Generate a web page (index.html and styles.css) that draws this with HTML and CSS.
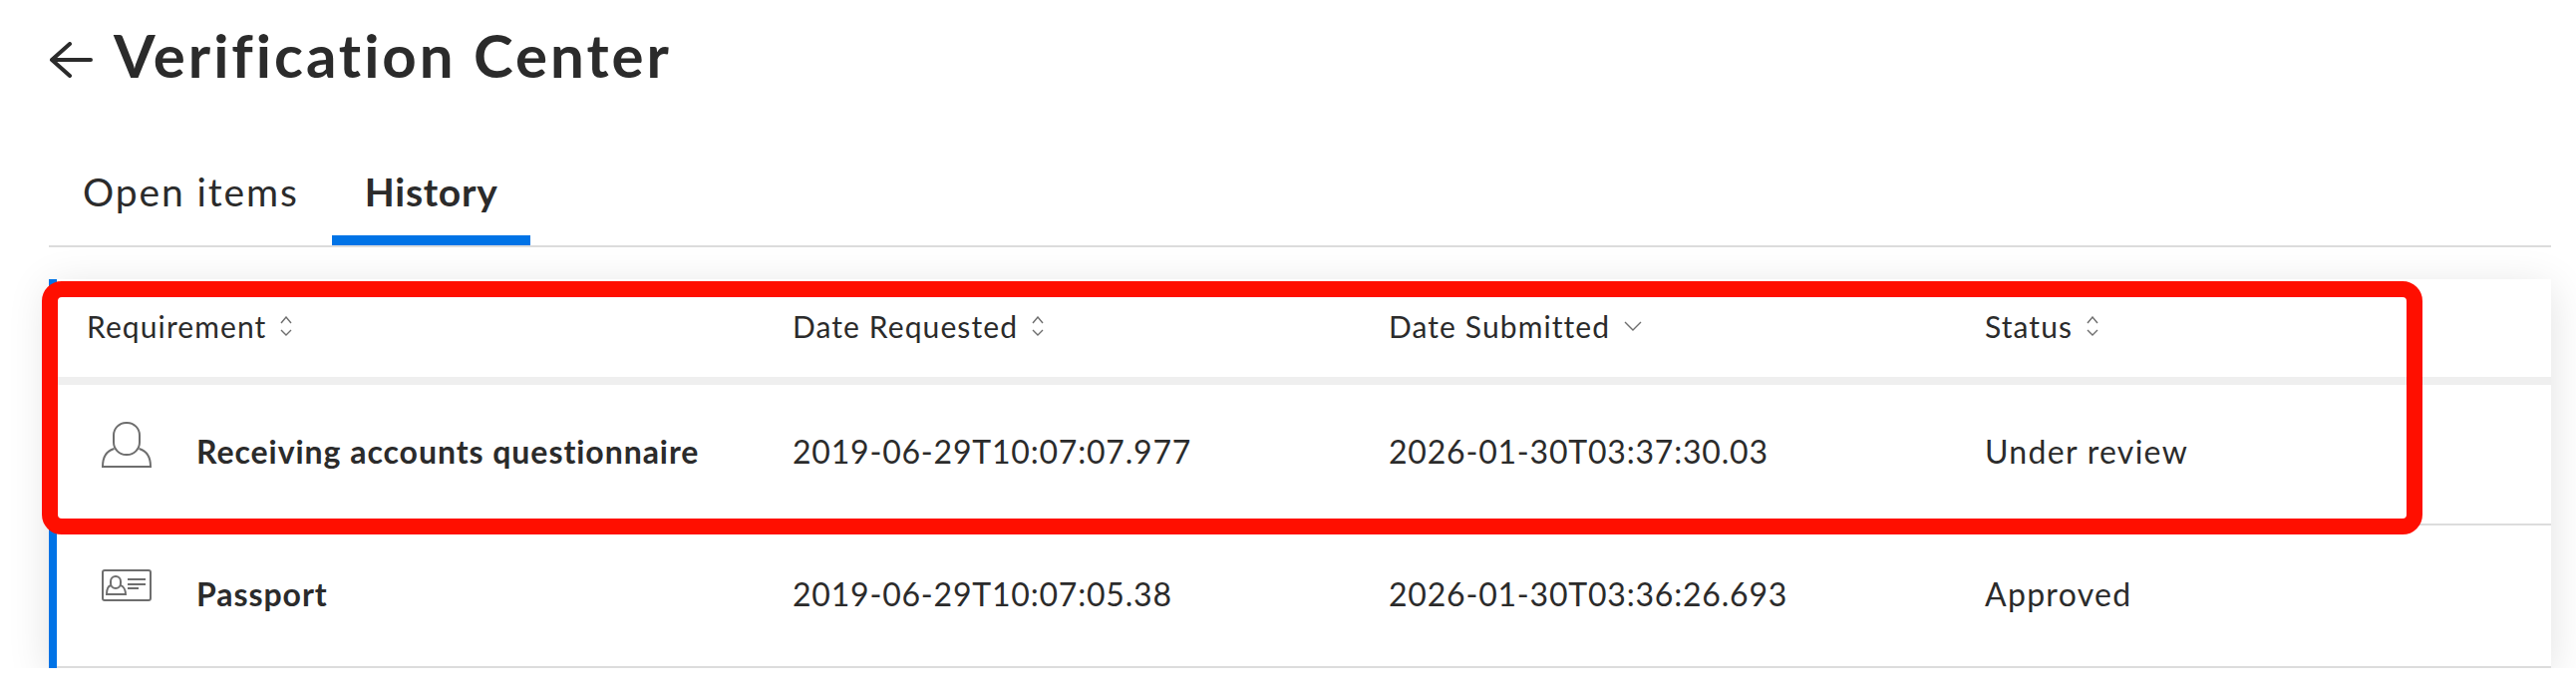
FILE: index.html
```html
<!DOCTYPE html>
<html lang="en">
<head>
    <meta charset="UTF-8">
    <meta name="viewport" content="width=device-width, initial-scale=1.0">
    <title>Verification Center</title>
    <link rel="stylesheet" href="styles.css">
</head>
<body>
    <header class="page-header">
        <svg class="back-arrow" width="44" height="36" viewBox="0 0 44 36" fill="none" stroke="#2b2b2b" stroke-width="4" stroke-linecap="round" stroke-linejoin="round">
            <path d="M21 2 L3 18 L21 34 M3 18 H42"/>
        </svg>
        <h1>Verification Center</h1>
    </header>

    <nav class="tabs">
        <a class="tab">Open items</a>
        <a class="tab active">History</a>
    </nav>

    <div class="card">
        <div class="row head-row">
            <div class="cell">Requirement
                <svg class="sort" width="12" height="20" viewBox="0 0 12 20" fill="none" stroke="#6e6e6e" stroke-width="1.4"><path d="M1 7 L6 1 L11 7 M1 14 L6 19 L11 14"/></svg>
            </div>
            <div class="cell">Date Requested
                <svg class="sort" width="12" height="20" viewBox="0 0 12 20" fill="none" stroke="#6e6e6e" stroke-width="1.4"><path d="M1 7 L6 1 L11 7 M1 14 L6 19 L11 14"/></svg>
            </div>
            <div class="cell">Date Submitted
                <svg class="sort" width="18" height="10" viewBox="0 0 18 10" fill="none" stroke="#6e6e6e" stroke-width="1.4"><path d="M1 1 L9 9 L17 1"/></svg>
            </div>
            <div class="cell">Status
                <svg class="sort" width="12" height="20" viewBox="0 0 12 20" fill="none" stroke="#6e6e6e" stroke-width="1.4"><path d="M1 7 L6 1 L11 7 M1 14 L6 19 L11 14"/></svg>
            </div>
        </div>

        <div class="row item-row first-item">
            <div class="cell name-cell">
                <svg class="item-icon" width="50" height="46" viewBox="0 0 50 46" fill="none" stroke="#6e6e6e" stroke-width="2">
                    <rect x="12" y="1" width="26" height="32" rx="12.5"/>
                    <path d="M12.500 27 C5 29 1 35 1 45 H49 C49 35 45 29 37.500 27"/>
                </svg>
                <span class="item-name">Receiving accounts questionnaire</span>
            </div>
            <div class="cell">2019-06-29T10:07:07.977</div>
            <div class="cell">2026-01-30T03:37:30.03</div>
            <div class="cell status-cell">Under review</div>
        </div>

        <div class="row item-row last-item">
            <div class="cell name-cell">
                <svg class="item-icon id-icon" width="50" height="32" viewBox="0 0 50 32" fill="none" stroke="#6e6e6e" stroke-width="2">
                    <rect x="1" y="1" width="48" height="30" rx="2"/>
                    <rect x="9" y="7" width="10" height="12" rx="5"/>
                    <path d="M9 16 C6 17 5 21 5 25 H24 C24 21 22 17 19 16"/>
                    <path d="M26 10 H44 M26 15 H44 M26 19 H37"/>
                </svg>
                <span class="item-name">Passport</span>
            </div>
            <div class="cell">2019-06-29T10:07:05.38</div>
            <div class="cell">2026-01-30T03:36:26.693</div>
            <div class="cell status-cell">Approved</div>
        </div>

        <div class="highlight"></div>
    </div>
</body>
</html>
```

FILE: styles.css
```css
* {
    margin: 0;
    padding: 0;
    box-sizing: border-box;
}

body {
    background: #fff;
    color: #2b2b2b;
    font-family: Lato, "Open Sans", sans-serif;
}

.page-header {
    display: flex;
    align-items: center;
    gap: 21px;
    height: 110px;
    padding-left: 49px;
}

.back-arrow {
    margin-top: 10px;
}

h1 {
    font-size: 60px;
    font-weight: 700;
    letter-spacing: 2.95px;
}

.tabs {
    display: flex;
    height: 138px;
    margin: 0 25px 32px 49px;
    padding-left: 1px;
    border-bottom: 2px solid #dcdcdc;
}

.tab {
    display: flex;
    align-items: center;
    padding: 38px 33px 0;
    font-size: 39px;
    letter-spacing: 1.9px;
    border-bottom: 10px solid transparent;
}

.tab.active {
    font-weight: 700;
    letter-spacing: 0.7px;
    border-bottom-color: #0073e6;
}

.card {
    position: relative;
    margin: 0 25px 0 49px;
    background: #fff;
    border-left: 8px solid #0073e6;
    box-shadow: 0 8px 40px rgba(0, 0, 0, 0.12);
}

.row {
    display: grid;
    grid-template-columns: 738px 598px 598px 1fr;
    align-items: center;
}

.head-row {
    height: 106px;
    padding-bottom: 4px;
    border-bottom: 8px solid #efefef;
    font-size: 30px;
    letter-spacing: 1.1px;
}

.head-row .cell:first-child {
    padding-left: 30px;
}

.head-row .cell {
    display: flex;
    align-items: center;
    gap: 14px;
}

.item-row {
    height: 141px;
    padding-bottom: 6px;
    font-size: 32px;
    letter-spacing: 0.8px;
    border-bottom: 2px solid #dcdcdc;
}

.last-item {
    height: 143px;
    padding-bottom: 4px;
}

.name-cell {
    display: flex;
    align-items: center;
    padding-left: 45px;
    gap: 45px;
}

.item-icon {
    margin-top: -13px;
}

.id-icon {
    margin-top: -17px;
}

.item-name {
    font-weight: 700;
    letter-spacing: 0.95px;
}

.status-cell {
    letter-spacing: 1.3px;
}

.highlight {
    position: absolute;
    left: -15px;
    top: 2px;
    width: 2388px;
    height: 254px;
    border: 16px solid #ff0f00;
    border-radius: 20px;
}
```
